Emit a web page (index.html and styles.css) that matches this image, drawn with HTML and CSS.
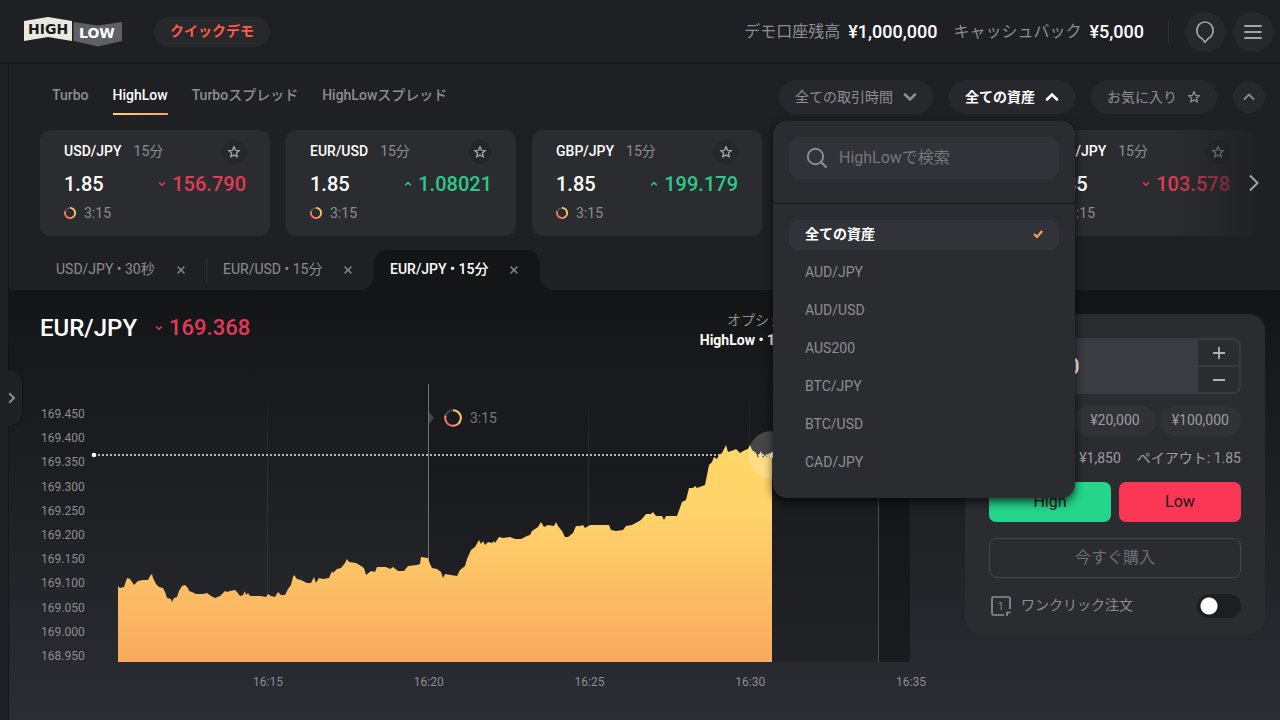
FILE: index.html
```html
<!DOCTYPE html>
<html lang="ja">
<head>
<meta charset="utf-8">
<title>HighLow クイックデモ</title>
<link rel="stylesheet" href="styles.css">
</head>
<body>
<svg class="defs" aria-hidden="true">
  <defs>
    <linearGradient id="ring-warm" x1="1" y1="0" x2="0" y2="1">
      <stop offset="0" stop-color="#ffd65c"/><stop offset="0.55" stop-color="#f9ae62"/><stop offset="1" stop-color="#f8455c"/>
    </linearGradient>
    <symbol id="star" viewBox="0 0 14 14"><path d="M7 1.6l1.5 3.7 4 .3-3.1 2.5 1 3.9L7 9.9 3.6 12l1-3.9L1.5 5.6l4-.3z" fill="none" stroke="currentColor" stroke-width="1.3" stroke-linejoin="round"/></symbol>
    <symbol id="cross" viewBox="0 0 10 10"><path d="M1.6 1.600l6.800 6.800M8.400 1.600L1.600 8.400" fill="none" stroke="currentColor" stroke-width="1.500"/></symbol>
    <symbol id="down" viewBox="0 0 8 6"><path d="M1.2 1.6L4 4.2l2.8-2.6" fill="none" stroke="currentColor" stroke-width="1.5"/></symbol>
    <symbol id="up" viewBox="0 0 8 6"><path d="M1.2 4.2L4 1.6l2.8 2.6" fill="none" stroke="currentColor" stroke-width="1.5"/></symbol>
    <symbol id="ring" viewBox="0 0 18 18"><circle cx="9" cy="9" r="7.8" fill="none" stroke="#4a4b50" stroke-width="1.8"/><path d="M9 1.2A7.8 7.8 0 1 1 1.6 6.6" fill="none" stroke="url(#ring-warm)" stroke-width="2"/></symbol>
    <symbol id="ring-small" viewBox="0 0 12 12"><circle cx="6" cy="6" r="5.1" fill="none" stroke="#55565a" stroke-width="1.500"/><path d="M6 0.900A5.100 5.100 0 1 1 1.200 4.400" fill="none" stroke="url(#ring-warm)" stroke-width="1.800"/></symbol>
  </defs>
</svg>

<header class="topbar">
  <a class="logo" href="#" aria-label="HighLow">
    <svg width="98" height="30" viewBox="0 0 98 30">
      <path d="M0 4L24 0l24 4v20l-24-4-24 4z" fill="#ebe9df"/>
      <path d="M49.500 5L74 8.500 98 5v19l-24 5.500L49.500 24z" fill="#5e6065"/>
      <text x="4" y="17" class="logo-text" fill="#18191b">HIGH</text>
      <text x="55" y="21" class="logo-text" fill="#fff">LOW</text>
    </svg>
  </a>
  <button class="demo">クイックデモ</button>
  <div class="balances">
    <span class="bal"><span>デモ口座残高</span><b>¥1,000,000</b></span>
    <span class="bal"><span>キャッシュバック</span><b>¥5,000</b></span>
  </div>
  <div class="tools">
    <button class="round" aria-label="ツアー"><svg width="20" height="24" viewBox="0 0 20 24"><path d="M10 22.300L6.800 18.500C4 16.800 1.900 14.200 1.900 10.400a8.100 8.400 0 0 1 16.200 0c0 3.800-2.100 6.400-4.900 8.100z" fill="none" stroke="currentColor" stroke-width="1.700" stroke-linejoin="round"/></svg></button>
    <button class="round" aria-label="メニュー"><svg width="20" height="16" viewBox="0 0 20 16"><path d="M2 2h16M2 8h16M2 14h16" stroke="currentColor" stroke-width="1.800" stroke-linecap="round"/></svg></button>
  </div>
</header>

<div class="shell">
  <aside class="rail"><button class="handle" aria-label="開く"><svg width="8" height="12" viewBox="0 0 8 12"><path d="M1.200 1.200L6 6l-4.800 4.800" fill="none" stroke="currentColor" stroke-width="2"/></svg></button></aside>
  <main class="main">
    <div class="filterbar">
      <nav class="modes">
        <a href="#">Turbo</a><a href="#" class="on">HighLow</a><a href="#">Turboスプレッド</a><a href="#">HighLowスプレッド</a>
      </nav>
      <div class="filters">
        <button class="pill">全ての取引時間<svg width="14" height="10" viewBox="0 0 14 10"><path d="M2 2.500l5 5 5-5" fill="none" stroke="currentColor" stroke-width="2.600" stroke-linecap="round"/></svg></button>
        <div class="picker">
          <button class="pill open" aria-expanded="true">全ての資産<svg width="14" height="10" viewBox="0 0 14 10"><path d="M2 7.500l5-5 5 5" fill="none" stroke="currentColor" stroke-width="2.600" stroke-linecap="round"/></svg></button>
          <div class="menu">
            <div class="menu-head">
              <label class="search">
                <svg width="22" height="22" viewBox="0 0 22 22"><circle cx="9.500" cy="9.500" r="7.700" fill="none" stroke="currentColor" stroke-width="1.900"/><path d="M15 15l5.500 5.500" stroke="currentColor" stroke-width="2.200"/></svg>
                <input type="search" placeholder="HighLowで検索" aria-label="検索">
              </label>
            </div>
            <div class="menu-list">
              <button class="chosen">全ての資産<svg width="12" height="10" viewBox="0 0 12 10"><path d="M2 5l3 3 5.200-6" fill="none" stroke="#fba457" stroke-width="2.200"/></svg></button>
              <button>AUD/JPY</button><button>AUD/USD</button><button>AUS200</button><button>BTC/JPY</button><button>BTC/USD</button><button>CAD/JPY</button>
            </div>
          </div>
        </div>
        <button class="pill">お気に入り<svg width="14" height="14"><use href="#star"/></svg></button>
        <button class="fold" aria-label="閉じる"><svg width="12" height="8" viewBox="0 0 12 8"><path d="M1 6.500l5-5 5 5" fill="none" stroke="currentColor" stroke-width="1.800"/></svg></button>
      </div>
    </div>

    <section class="cards">
      <article class="card">
        <div class="row"><b>USD/JPY</b><span>15分</span><button class="fav" aria-label="お気に入り"><svg width="14" height="14"><use href="#star"/></svg></button></div>
        <div class="row quote"><strong>1.85</strong><span class="price fall"><svg width="8" height="6"><use href="#down"/></svg>156.790</span></div>
        <div class="row time"><svg width="12" height="12"><use href="#ring-small"/></svg>3:15</div>
      </article>
      <article class="card">
        <div class="row"><b>EUR/USD</b><span>15分</span><button class="fav" aria-label="お気に入り"><svg width="14" height="14"><use href="#star"/></svg></button></div>
        <div class="row quote"><strong>1.85</strong><span class="price rise"><svg width="8" height="6"><use href="#up"/></svg>1.08021</span></div>
        <div class="row time"><svg width="12" height="12"><use href="#ring-small"/></svg>3:15</div>
      </article>
      <article class="card">
        <div class="row"><b>GBP/JPY</b><span>15分</span><button class="fav" aria-label="お気に入り"><svg width="14" height="14"><use href="#star"/></svg></button></div>
        <div class="row quote"><strong>1.85</strong><span class="price rise"><svg width="8" height="6"><use href="#up"/></svg>199.179</span></div>
        <div class="row time"><svg width="12" height="12"><use href="#ring-small"/></svg>3:15</div>
      </article>
      <article class="card">
        <div class="row"><b>EUR/JPY</b><span>15分</span><button class="fav" aria-label="お気に入り"><svg width="14" height="14"><use href="#star"/></svg></button></div>
        <div class="row quote"><strong>1.85</strong><span class="price fall"><svg width="8" height="6"><use href="#down"/></svg>169.368</span></div>
        <div class="row time"><svg width="12" height="12"><use href="#ring-small"/></svg>3:15</div>
      </article>
      <article class="card">
        <div class="row"><b>AUD/JPY</b><span>15分</span><button class="fav" aria-label="お気に入り"><svg width="14" height="14"><use href="#star"/></svg></button></div>
        <div class="row quote"><strong>1.85</strong><span class="price fall"><svg width="8" height="6"><use href="#down"/></svg>103.578</span></div>
        <div class="row time"><svg width="12" height="12"><use href="#ring-small"/></svg>3:15</div>
      </article>
      <button class="next" aria-label="次へ"><svg width="12" height="18" viewBox="0 0 12 18"><path d="M2 1.500L9.500 9 2 16.500" fill="none" stroke="currentColor" stroke-width="2"/></svg></button>
    </section>

    <div class="tabs">
      <div class="tab"><span>USD/JPY • 30秒</span><button aria-label="閉じる"><svg width="10" height="10"><use href="#cross"/></svg></button></div>
      <div class="tab ruled"><span>EUR/USD • 15分</span><button aria-label="閉じる"><svg width="10" height="10"><use href="#cross"/></svg></button></div>
      <div class="tab current"><span>EUR/JPY • 15分</span><button aria-label="閉じる"><svg width="10" height="10"><use href="#cross"/></svg></button></div>
    </div>

    <section class="trade">
      <div class="board">
        <div class="title">
          <h1>EUR/JPY</h1>
          <span class="price fall"><svg width="8" height="6"><use href="#down"/></svg>169.368</span>
          <div class="option"><span>オプション</span><b>HighLow • 15分</b></div>
        </div>
        <div class="chart">
          <div class="yaxis"><span>169.450</span><span>169.400</span><span>169.350</span><span>169.300</span><span>169.250</span><span>169.200</span><span>169.150</span><span>169.100</span><span>169.050</span><span>169.000</span><span>168.950</span></div>
          <div class="plot">
            <svg class="curve" viewBox="94 384 816 278" preserveAspectRatio="none">
              <defs>
                <linearGradient id="gold" x1="0" y1="0" x2="0" y2="1"><stop offset="0" stop-color="#ffd666"/><stop offset="0.3" stop-color="#ffd46a"/><stop offset="1" stop-color="#f9a95f"/></linearGradient>
                <linearGradient id="shade" x1="0" y1="0" x2="0" y2="1"><stop offset="0" stop-color="#17181b" stop-opacity="0"/><stop offset="0.3" stop-color="#18191c"/><stop offset="0.5" stop-color="#1c1d20"/><stop offset="1" stop-color="#222327"/></linearGradient>
                <linearGradient id="closed" x1="0" y1="0" x2="0" y2="1"><stop offset="0" stop-color="#141517" stop-opacity="0"/><stop offset="0.4" stop-color="#151619"/><stop offset="1" stop-color="#1a1b1f"/></linearGradient>
                <linearGradient id="grid" gradientUnits="userSpaceOnUse" x1="0" y1="390" x2="0" y2="480"><stop offset="0" stop-color="#313236" stop-opacity="0"/><stop offset="1" stop-color="#313236"/></linearGradient>
              </defs>
              <rect x="429" y="384" width="449" height="278" fill="url(#shade)"/>
              <rect x="879" y="384" width="31" height="278" fill="url(#closed)"/>
              <path d="M267 390h1v272h-1zM588 390h1v272h-1zM749 390h1v272h-1z" fill="url(#grid)"/>
              <path d="M428 384h1v278h-1z" fill="#707275"/>
              <path d="M878 384h1v278h-1z" fill="#4a4b4f"/>
              <path d="M429 412l5 6-5 6z" fill="#45464a"/>
              <path d="M94 455H773" stroke="#b4b5b8" stroke-width="2" stroke-dasharray="2 2"/>
              <circle cx="94" cy="455" r="2.300" fill="#fff"/>
              <path fill="url(#gold)" d="M118 662V586L120 588 124 587 127 578 130 579 134 585 138 581 143 580 148 580 150 576 152 574 153 578 156 584 159 587 163 588 165 592 167 598 171 599 172 602 174 598 177 597 179 591 182 586 185 585 188 588 189 591 192 592 196 594 203 594 207 593 211 596 215 598 220 596 225 591 227 592 230 591 235 590 237 592 240 596 243 595 245 591 246 595 248 593 250 596 260 596 266 597 268 594 271 596 275 597 278 592 281 595 285 595 288 589 291 585 293 577 294 575 297 579 301 580 307 583 311 583 314 577 316 583 319 578 323 579 329 578 332 571 333 573 337 569 341 568 345 563 347 559 349 562 356 563 361 566 364 568 366 575 371 571 375 572 377 567 386 567 390 569 393 567 398 571 404 571 408 566 417 565 420 564 421 557 428 558 430 564 432 568 437 569 441 572 443 578 445 574 451 575 457 576 460 570 465 566 467 559 471 550 475 547 479 540 481 544 483 541 485 545 488 542 492 543 494 541 495 543 499 537 503 538 510 537 515 539 521 539 527 536 530 535 532 531 538 527 541 522 544 527 548 525 554 526 556 522 558 526 562 531 565 537 568 537 573 533 576 526 580 526 583 525 585 528 590 525 609 525 611 530 616 531 623 530 626 526 632 525 641 520 646 514 651 514 653 512 656 516 662 516 664 520 666 516 677 516 682 502 686 500 689 488 693 488 695 486 697 488 705 485 707 475 709 465 712 462 714 457 717 459 719 455 722 453 724 449 726 445 728 452 734 450 736 449 740 453 745 450 748 449 750 445 752 450 756 453 758 458 760 453 761 451 763 458 765 455 767 457 769 453 771 454 772 452V662z"/>
              <circle cx="772" cy="455" r="24" fill="#fff" fill-opacity="0.2"/>
              <circle cx="773" cy="455" r="3" fill="#fff"/>
            </svg>
            <span class="countdown"><svg width="18" height="18"><use href="#ring"/></svg>3:15</span>
            <div class="xaxis"><span>16:15</span><span>16:20</span><span>16:25</span><span>16:30</span><span>16:35</span></div>
          </div>
        </div>
      </div>

      <form class="order" onsubmit="return false">
        <div class="amount">
          <input type="text" value="¥1,000" aria-label="金額">
          <div class="steps">
            <button type="button" aria-label="増やす"><svg width="14" height="14" viewBox="0 0 14 14"><path d="M7 1v12M1 7h12" stroke="currentColor" stroke-width="1.800"/></svg></button>
            <button type="button" aria-label="減らす"><svg width="14" height="14" viewBox="0 0 14 14"><path d="M1 7h12" stroke="currentColor" stroke-width="2"/></svg></button>
          </div>
        </div>
        <div class="chips"><button type="button">¥10,000</button><button type="button">¥20,000</button><button type="button">¥100,000</button></div>
        <div class="payout"><span>払戻額: ¥1,850</span><span>ペイアウト: 1.85</span></div>
        <div class="sides"><button type="button" class="high">High</button><button type="button" class="low">Low</button></div>
        <button type="button" class="buy">今すぐ購入</button>
        <label class="oneclick">
          <svg width="22" height="22" viewBox="0 0 22 22"><path d="M14 20H3.500A1.500 1.500 0 0 1 2 18.500v-15A1.500 1.500 0 0 1 3.500 2h15A1.500 1.500 0 0 1 20 3.500V14M17 21v-3.500h3.500" fill="none" stroke="currentColor" stroke-width="1.700"/><text x="8" y="15" class="one" fill="currentColor">1</text></svg>
          <span>ワンクリック注文</span>
          <input type="checkbox" role="switch">
        </label>
      </form>
    </section>
  </main>
</div>
</body>
</html>
```
FILE: styles.css
```css
* { box-sizing: border-box; }

body {
  margin: 0;
  min-height: 100vh;
  display: flex;
  flex-direction: column;
  background: #1f2023;
  color: #8d8e91;
  font: 14px/20px Roboto, "Noto Sans CJK JP", sans-serif;
  overflow: hidden;
}

button, input { font: inherit; color: inherit; border: 0; margin: 0; padding: 0; background: none; }
button { cursor: pointer; display: flex; align-items: center; justify-content: center; white-space: nowrap; }
a { color: inherit; text-decoration: none; }
svg { display: block; flex: none; }
.defs { position: absolute; width: 0; height: 0; }

/* top bar */
.topbar { display: flex; align-items: center; height: 64px; padding: 0 7px 0 24px; border-bottom: 1px solid #141518; }
.logo-text { font: bold 14px "DejaVu Sans", sans-serif; }
.demo { margin-left: 32px; height: 30px; padding: 0 16px 2px; border-radius: 15px; background: #27282c; color: #ff5a48; font-weight: 700; }
.balances { margin-left: auto; display: flex; gap: 16px; font-size: 16px; white-space: nowrap; }
.bal { display: flex; align-items: center; gap: 8px; }
.bal b { color: #fff; font-size: 18px; font-weight: 500; }
.tools { display: flex; align-items: center; gap: 8px; margin-left: 24px; padding-left: 17px; position: relative; }
.tools::before { content: ""; position: absolute; left: 0; top: 8px; bottom: 8px; width: 1px; background: #2d2e32; }
.round { width: 40px; height: 40px; border-radius: 50%; background: #27282c; color: #a3a4a7; }

/* shell */
.shell { flex: 1; display: flex; }
.rail { width: 9px; border-right: 1px solid #151619; position: relative; }
.handle { position: absolute; left: 8px; top: 306px; width: 14px; height: 56px; border-radius: 0 14px 14px 0; background: #202124; justify-content: flex-start; box-shadow: 1px 0 2px #141518; z-index: 2; }
.main { flex: 1; min-width: 0; display: flex; flex-direction: column; }

/* modes and filters */
.filterbar { display: flex; justify-content: space-between; align-items: center; padding: 14px 15px 0 43px; height: 52px; }
.modes { display: flex; gap: 24px; font-weight: 500; }
.modes a { padding: 6px 0 8px; border-bottom: 2px solid transparent; }
.modes .on { color: #fff; border-image: linear-gradient(90deg, #ffd27a, #f9a45c) 1; }
.filters { display: flex; align-items: center; gap: 16px; }
.pill { height: 34px; padding: 0 16px; gap: 10px; border-radius: 17px; background: #27282c; }
.pill.open { color: #fff; font-weight: 700; }
.fold { width: 32px; height: 32px; border-radius: 50%; background: #27282c; }
.picker { position: relative; }

/* asset menu */
.menu { position: absolute; z-index: 5; top: 100%; right: 0; width: 302px; margin-top: 7px; padding-bottom: 20px; border-radius: 14px; background: #2b2c30; box-shadow: 0 4px 10px rgba(0, 0, 0, 0.7); }
.menu-head { padding: 16px 16px 24px; border-bottom: 1px solid #17181a; }
.search { display: flex; align-items: center; gap: 11px; height: 42px; padding: 0 17px; border-radius: 10px; background: #323338; }
.search input { flex: 1; min-width: 0; font-size: 16px; outline: 0; }
.search input::placeholder { color: #75767a; opacity: 1; }
.menu-list { display: flex; flex-direction: column; gap: 8px; padding: 16px 16px 0; }
.menu-list button { height: 30px; padding: 0 15px 2px 16px; justify-content: space-between; border-radius: 8px; }
.menu-list .chosen { background: #323338; color: #fff; font-weight: 700; }

/* instrument cards */
.cards { display: flex; gap: 16px; margin: 14px 0 14px; padding-left: 31px; position: relative; overflow: hidden; }
.cards::after { content: ""; position: absolute; right: 0; top: 0; bottom: 0; width: 110px; background: linear-gradient(90deg, rgba(31, 32, 35, 0), #1f2023 90%); }
.card { flex: none; width: 230px; height: 106px; padding: 10px 24px; border-radius: 10px; background: #2b2c30; display: flex; flex-direction: column; gap: 8px; }
.row { display: flex; align-items: center; gap: 12px; height: 24px; }
.row b, .row > span:not(.price) { padding-bottom: 2px; }
.row b { color: #fff; font-weight: 500; }
.fav { margin-left: auto; width: 24px; height: 24px; border-radius: 50%; background: #26272b; color: #a3a4a7; }
.quote { justify-content: space-between; }
.quote strong { color: #fff; font-size: 20px; font-weight: 500; }
.price { display: flex; align-items: center; gap: 6px; font-size: 20px; font-weight: 500; }
.fall { color: #e23a57; }
.rise { color: #2dc98a; }
.row.time { gap: 8px; height: 18px; }
.next { position: absolute; z-index: 1; right: 18px; top: 43px; width: 16px; height: 20px; color: #a3a4a7; }

/* position tabs */
.tabs { display: flex; height: 40px; padding-left: 31px; }
.tab { display: flex; align-items: center; justify-content: space-between; width: 167px; padding: 0 20px 2px 16px; position: relative; white-space: nowrap; }
.tab.ruled::before { content: ""; position: absolute; left: -1px; top: 8px; height: 24px; width: 1px; background: #2f3034; }
.tab.current { width: 166px; background: #141517; color: #fff; font-weight: 500; border-radius: 14px 14px 0 0; }
.tab.current::before, .tab.current::after { content: ""; position: absolute; bottom: 0; width: 14px; height: 14px; }
.tab.current::before { right: 100%; background: radial-gradient(circle at 0 0, #1f2023 14px, #141517 14px); }
.tab.current::after { left: 100%; background: radial-gradient(circle at 100% 0, #1f2023 14px, #141517 14px); }
.tab button { color: #7d7e82; width: 12px; padding-top: 2px; }

/* trading area */
.trade { flex: 1; display: flex; align-items: flex-start; gap: 55px; padding: 24px 15px 0 31px; background: linear-gradient(#141517, #1e1f22 45%, #2c2d33); }
.board { flex: 1; min-width: 0; }
.title { display: flex; align-items: center; height: 28px; gap: 18px; }
.title h1 { margin: 0; color: #fff; font-size: 24px; font-weight: 500; }
.title .price { font-size: 22px; }
.option { margin: 4px 113px 0 auto; display: flex; flex-direction: column; align-items: flex-end; white-space: nowrap; }
.option b { color: #fff; font-weight: 700; }
.chart { display: flex; margin-top: 42px; }
.yaxis { width: 54px; height: 258px; margin-top: 22px; padding-left: 1px; display: flex; flex-direction: column; justify-content: space-between; font-size: 12px; line-height: 16px; }
.plot { flex: 1; min-width: 0; position: relative; }
.curve { width: 100%; height: 278px; overflow: visible; }
.countdown { position: absolute; left: 43%; top: 24px; margin-left: -1px; display: flex; align-items: center; gap: 8px; color: #77787c; }
.xaxis { display: flex; justify-content: space-between; margin: 12px -16px 0 159px; font-size: 12px; line-height: 16px; }

/* order panel */
.order { width: 300px; padding: 24px 24px 16px; border-radius: 16px; background: #2b2c30; display: flex; flex-direction: column; }
.amount { display: flex; height: 56px; border: 2px solid #3a3b40; border-radius: 8px; overflow: hidden; }
.amount input { flex: 1; min-width: 0; padding-left: 22px; background: #3a3c43; color: #fff; font-size: 22px; font-weight: 500; outline: 0; }
.steps { width: 41px; display: grid; grid-template-rows: 1fr 1fr; gap: 2px; background: #3a3b40; }
.steps button { background: #2b2c30; color: #b2b3b6; }
.chips { display: flex; gap: 4px; margin-top: 12px; }
.chips button { flex: 1; height: 30px; padding-bottom: 2px; border-radius: 15px; background: #313236; color: #9c9da0; }
.payout { display: flex; justify-content: flex-end; gap: 16px; margin-top: 12px; white-space: nowrap; color: #9c9da0; }
.sides { display: flex; gap: 8px; margin-top: 14px; }
.sides button { flex: 1; height: 40px; border-radius: 7px; color: #17181a; font-size: 16px; }
.high { background: #25d58c; }
.low { background: #fa3856; }
.buy { height: 40px; margin-top: 16px; border: 1px solid #46474b; border-radius: 8px; color: #6d6e72; font-size: 16px; }
.oneclick { display: flex; align-items: center; gap: 9px; height: 24px; margin-top: 16px; padding-left: 1px; }
.oneclick span { padding-bottom: 2px; }
.one { font: 10px Roboto, sans-serif; }
.oneclick input { appearance: none; margin-left: auto; width: 44px; height: 24px; border-radius: 12px; background: radial-gradient(circle at 12px 12px, #fff 8px, #1d1e21 9px); }
```
